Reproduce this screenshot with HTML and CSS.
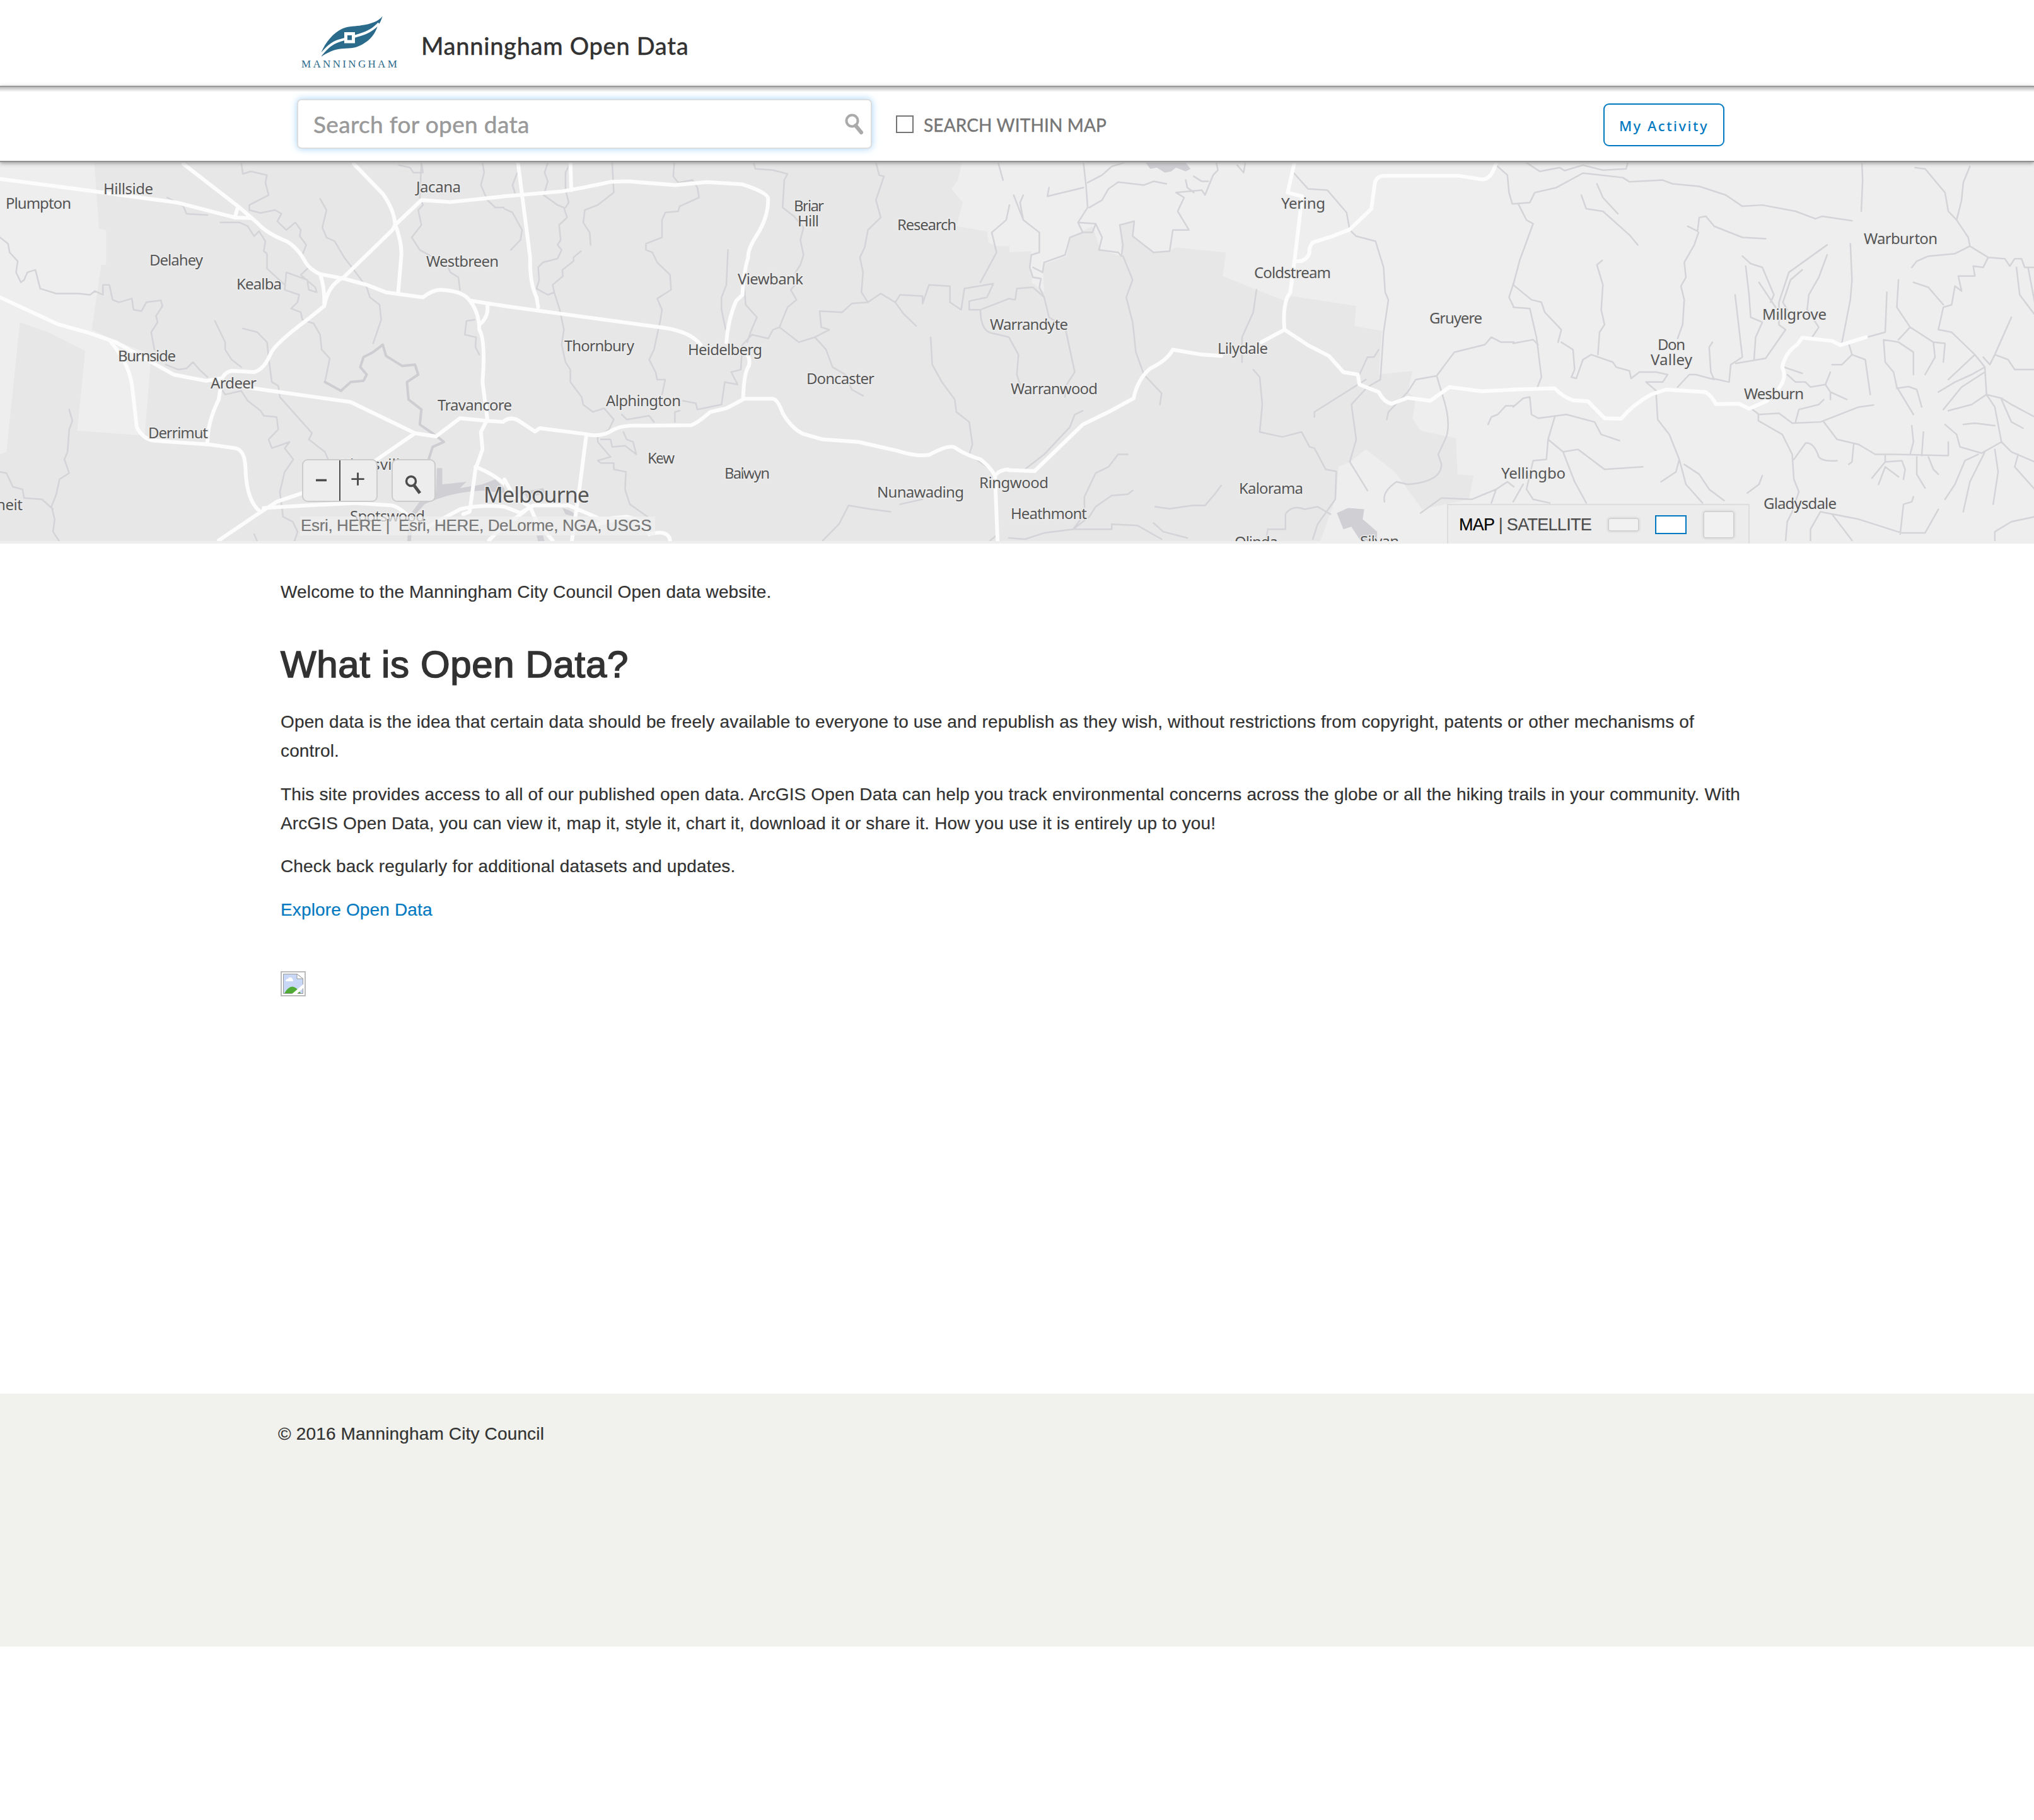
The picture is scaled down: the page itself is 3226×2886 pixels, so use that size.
FILE: index.html
```html
<!DOCTYPE html>
<html lang="en">
<head>
<meta charset="utf-8">
<title>Manningham Open Data</title>
<link rel="stylesheet" href="styles.css">
</head>
<body>
<header class="site-header">
  <svg class="logo" viewBox="0 0 160 90" role="img" aria-label="Manningham">
    <path fill="#2a6a8b" d="M130.500 3.700C124 12 112 16 98 18C88 20 78 19 68 23C52 30 40 46 34 60V67.500C41 63 50 58 58 56.500C68 54 78 55.500 88 53C104 48 118 36 122.500 20C127 14 129 9 130.500 3.700Z"/>
    <path fill="none" stroke="#fff" stroke-width="4" d="M32 66C42 54 50 46 62 42.500C72 39 80 38 89 35C104 31 115 26 125 15"/>
    <path fill="#2a6a8b" stroke="#fff" stroke-width="5" d="M72.500 31.500h12v12.500h-12z"/>
    <text class="logo-name" x="2" y="84.500" textLength="152">MANNINGHAM</text>
  </svg>
  <h1 class="site-title">Manningham Open Data</h1>
</header>

<div class="search-bar">
  <div class="search-box">
    <span class="placeholder">Search for open data</span>
    <svg class="box-icon" viewBox="0 0 30 34"><circle cx="11.500" cy="11.500" r="9" fill="none" stroke="#aaa" stroke-width="4"/><path d="M17 19L26 30" stroke="#aaa" stroke-width="6" stroke-linecap="round"/></svg>
  </div>
  <label class="within"><span class="check"></span><span>SEARCH WITHIN MAP</span></label>
  <a class="activity">My Activity</a>
</div>

<section class="map">
<svg class="map-canvas" viewBox="0 258 3226 600">
  <rect class="rural" x="0" y="250" width="3226" height="620"/>
  <!-- western tile -->
  <g transform="translate(0 250) scale(.5102 .3954)">
    <path class="urban" d="M292 0H1570V1568H0V1190L20 1180L62 660L150 700L265 775L240 1095L450 1115L470 790L370 740L285 690L300 560L315 430L330 430V290L308 285Z"/>
    <path class="water" d="M1358 1245H1375V1310L1450 1300L1430 1325L1500 1310L1540 1290L1570 1330V1345L1500 1335Q1400 1340 1320 1390L1285 1440L1275 1568H1265L1270 1440L1310 1370L1355 1340Z"/>
    <path class="stream" d="M750 20L755 65L780 55L830 70L825 100L835 150L775 190V210L810 222L855 210L875 225L862 255L890 290L918 260L935 290L932 315L952 350L940 390L960 440L935 470L980 520L985 540L960 530L955 490L890 460L885 530L930 550L925 580L905 605L935 620L940 650L975 665L995 710L1000 770L1025 805L1015 870L1010 900M520 160L550 180L570 195L580 225L645 230M685 260L745 260L770 275L790 315L805 295L825 335L820 375L830 385V445L885 510M995 165L1015 210L1002 280L1015 320L1040 335L1070 400L1100 450L1140 520L1150 560L1180 590L1185 650L1160 745M0 320L25 345L30 380L55 415L50 460L65 500L75 490L85 460L110 450L125 525L175 545L245 545L280 550L295 535L320 550V510L340 510L350 570L370 580L410 565L415 610L440 615L455 580L500 572L505 595L485 635L490 660L470 700L480 770M515 830L555 850L580 845L600 820L620 850L645 880M668 655L700 740L700 770L720 810L750 840M755 685L800 700L830 740L835 800L845 900L865 915L870 960L970 1105L960 1130L1010 1180L1020 1210M690 930L700 950L750 935L770 975L810 1015L820 1035L860 1040L865 1090L835 1130L845 1165L900 1140L885 1165L912 1210L885 1260L870 1340L880 1440L910 1460L925 1500L915 1540M215 1010L225 1055L215 1090L210 1180L200 1210L215 1265L185 1290L175 1350L160 1400L170 1450L165 1500L185 1540M0 1260L20 1265L40 1320L70 1330L75 1365L130 1370L165 1410M1310 20L1315 60L1285 60L1275 40L1240 30M1310 20L1305 160L1315 190L1300 210L1310 270L1280 320L1305 370L1390 430L1400 460L1425 480L1430 530M1500 20L1505 60L1495 110L1515 170L1540 200H1570M1475 650L1450 655L1445 710L1480 720L1478 760L1490 790M790 1510L800 1540"/>
    <path class="river" d="M1010 900L1060 935L1090 900L1130 895L1140 870L1120 840L1130 800L1160 780L1190 750L1200 795L1250 835L1290 830L1300 870L1265 900L1270 970L1310 1010L1305 1070L1355 1115L1380 1140L1345 1160L1330 1220"/>
    <path class="road" d="M0 85L280 133L550 180L730 240L780 242M570 25L740 195L800 262Q830 305 890 335Q925 360 950 420Q965 450 995 467L1068 485L1140 510L1200 540L1315 560Q1345 530 1370 530Q1440 535 1460 573L1570 595M740 195L730 240M1100 25L1190 145Q1225 210 1228 265Q1252 350 1247 400L1238 540M1570 155L1400 178L1310 170L1228 270L1220 290L1068 480Q1020 510 1008 595L960 645Q850 750 840 790Q820 850 790 860L720 855Q700 860 690 885L640 895L540 870L360 740L270 700L180 668L0 560M995 467Q1010 520 1008 595M345 740Q405 830 412 930L425 1080Q445 1130 480 1135L650 1150L730 1165Q760 1170 763 1240Q765 1370 805 1415M690 885L680 970Q645 1060 645 1140L640 1150M760 920L1090 980L1290 1105L1355 1118L1430 1045L1510 1055L1570 1060M1290 1105L1150 1230L940 1345L860 1380L800 1430L680 1535M820 1405L950 1395L1100 1385L1220 1395Q1260 1410 1290 1480M1460 573Q1490 620 1490 690Q1510 730 1500 900L1515 1050L1495 1100L1500 1170L1478 1250L1460 1420L1440 1430M1515 590Q1520 640 1490 670M1478 1240Q1530 1265 1570 1310M1330 1480L1430 1410Q1490 1390 1570 1400M1570 1470L1520 1535"/>
  </g>
  <!-- inner suburbs -->
  <g transform="translate(800 250) scale(.5102 .3954)">
    <path class="urban" d="M0 0H1425L1410 90L1390 125L1425 180L1405 275L1500 295L1505 340L1530 355H1570V1568H0Z"/>
    <path class="water" d="M60 1340L120 1325L130 1345L70 1365ZM180 1405Q220 1420 222 1440L190 1430ZM100 1515H120L125 1540H105Z"/>
    <path class="stream" d="M135 20L125 60L135 95L122 150L165 190L185 200L195 240L170 270L175 330L165 350L178 370L165 405L120 420L105 440L108 490L100 525L135 550L155 540L172 610L185 690L178 750L190 820L205 850V900L240 960L245 990L275 1020L310 1005L340 1050L325 1090L290 1120M205 20L190 60V130L200 180L190 200M335 20L340 140L325 155L290 190L250 210L245 260L265 300L268 350M238 375L215 400L215 415L180 450L182 475L150 510L155 540M0 205L25 220L55 290L50 330L20 370M40 60L25 110L35 150M528 20L525 75L540 100L585 90L600 120L605 160L545 195L540 215L500 220L490 250L490 320L440 345L440 370L460 380L475 420L515 470L518 530L475 565L490 610L485 650L465 770L450 810L470 860L475 890H500L490 950M695 370L690 510L675 560V610L688 690M775 20L780 45L835 50L880 65L870 90L865 200L900 235L930 280L920 330L930 390L920 430L905 460L910 500L890 530L908 570L880 600L855 680L835 690L820 725L770 710L740 750L735 850L705 860L725 910L685 900L675 990L600 1010L595 985L555 975M745 500L750 590L785 640L765 700L755 740M855 680L915 740L965 720L1010 690L985 680L980 615L1050 620L1080 585L1130 580L1170 545L1215 580L1230 550L1300 555V585L1320 510L1385 515V580L1420 610L1430 525L1520 505L1500 560L1445 575V610H1480L1570 565M1480 500L1530 380L1515 300L1560 250L1570 190M1155 20L1165 70L1180 75L1155 170L1170 240L1130 290L1120 360L1105 400L1115 460L1110 540L1130 580M1215 580L1240 625L1280 675M1480 610Q1480 700 1520 705L1570 720M965 720L1000 770L1020 840L1060 870L1080 930L1115 955M1325 720L1330 830L1360 900L1400 970L1405 1020L1445 1060L1455 1150L1445 1190L1500 1240M290 1120L290 1140L330 1200L290 1215L300 1225L340 1225V1250L378 1260L375 1330L390 1390L445 1440M370 1100L380 1130L400 1140L410 1190L375 1155L335 1160L330 1130L300 1130M365 1030L380 1050L450 1035L465 1060M530 1060V1020L545 1015M990 1535L1040 1470L1070 1395L1140 1410L1200 1420M1230 1390L1300 1370M1510 1535L1530 1515M1535 20L1550 90"/>
    <path class="road" d="M0 155L180 135Q250 120 330 97L385 95L530 110L630 98L740 107Q820 140 820 165Q820 240 785 310Q755 370 758 400Q745 450 740 550L720 575Q695 650 690 740M205 20L208 130M42 20L80 400Q78 500 100 560L105 600M0 595L170 625L500 683Q580 700 610 750M755 790Q765 810 760 835Q745 860 742 965M0 1055Q25 1035 50 1060L95 1098L110 1085L250 1108Q300 1125 340 1090Q370 1070 430 1075L580 1073Q600 1065 640 1020L690 1005Q720 985 745 967L835 967Q850 970 865 1025Q895 1090 930 1108L990 1130L1100 1140L1220 1175Q1280 1200 1320 1192Q1380 1150 1400 1162Q1430 1190 1480 1210Q1510 1240 1525 1275L1533 1535M1525 1275Q1540 1250 1570 1250M255 1110L235 1310L210 1535M0 1400L50 1425L90 1395L200 1395L300 1450L380 1440Q430 1450 450 1510Q510 1490 515 1535M0 1290L30 1360L80 1400L30 1450M80 1400L100 1460L150 1535M380 1440L290 1470"/>
  </g>
  <!-- outer east -->
  <g transform="translate(1600 250) scale(.5102 .3954)">
    <path class="urban" d="M0 380L70 375L65 440L75 470L70 500L110 540L105 430L180 395L190 320L260 275L285 370L350 395L345 270L390 250L385 320L450 380L500 375L520 360L675 380L665 475L770 530L860 575L880 555L1080 595L1075 675L1160 695L1150 870L1255 855L1240 940L1265 965L1255 1045L1280 1095L1390 1125L1395 1270L1445 1275L1430 1370L1285 1410L1200 1260L1110 1170L1060 1220L1025 1240L1018 1360L960 1568H0Z"/>
    <path class="water" d="M425 20L440 45L460 40L485 60L505 55L520 40L550 55L565 45L550 20ZM1020 1425L1055 1405L1105 1410L1100 1450L1145 1500L1145 1540H1095L1065 1480L1040 1490Z"/>
    <path class="stream" d="M232 20L240 110L245 200L215 260L270 265L260 300L230 300L215 260M232 120L120 155L125 120M360 20L320 35L290 70L245 100M490 105L450 95L420 110L340 98L310 125L290 170L250 200M15 150L45 250L95 300V380L70 390L65 440L75 480L100 485L95 520L110 560L125 640L175 680L205 860L175 920V960M45 150L35 180L45 250M75 440L105 460L110 420L175 390L190 320L230 300M270 265L290 320L280 370L340 380L350 395L355 350L345 270L390 255L385 315L450 380L500 375L510 290L560 290L525 215L545 160L520 140L600 130L610 150L635 70L650 50L645 20M355 395L385 490L365 560L385 660L395 780L420 870L475 945L470 990M550 90L555 120L575 140M575 75L600 95L620 95M710 30L730 60L735 20M885 60L930 125L990 130L1050 220L1060 290L1080 315L1140 335L1165 440L1170 540L1180 570L1165 700L1155 890L1115 920L1065 990L1080 1130L1060 1220L1115 1335M770 530L760 620L725 720L725 820M760 850L780 880L788 990L780 1100L850 1120L910 1100L935 1160L950 1165L985 1250L1018 1258L1015 1370L960 1470L945 1530M1150 770L1135 800L1115 800L1090 870M1110 890L950 1020V1040M0 565L20 570L25 525L75 520L110 560M0 720L30 790L25 870L35 910M230 1015L205 1030L190 1080L110 1190L50 1250M370 1190L340 1190L310 1240L270 1265L235 1360V1430L200 1490M385 1335L370 1350L320 1355L270 1400L250 1440L200 1490L110 1505L50 1530L0 1525M200 1490L320 1490V1470L400 1475L475 1530M450 1465L480 1500L555 1525M455 1400L500 1408L570 1395L610 1395L640 1350L660 1315M800 1535L805 1490H860V1430Q880 1390 920 1410L960 1400L1000 1430M1175 1050L1180 1020L1240 940L1265 890L1330 875L1385 780L1480 750L1500 720L1530 740H1570M1330 875L1350 960Q1375 1060 1360 1120L1335 1190L1345 1230Q1345 1300 1240 1310L1205 1300Q1160 1340 1168 1380M1570 995L1545 995L1520 1030L1500 1040L1490 1070M1280 1425L1345 1365L1440 1370L1515 1330L1550 1300L1570 1320M1515 1330L1500 1385M1515 30L1550 70L1555 140L1565 185M1570 500L1555 560L1570 600"/>
    <path class="road" d="M888 20L867 140L912 155L888 415L875 540Q850 580 857 690M1515 20Q1500 90 1470 87L1400 73H1165Q1140 75 1137 110L1127 205L1060 288L1000 318L945 340Q932 360 935 380Q925 420 890 415M857 690L785 740M857 690L930 752L995 795L1040 860L1085 870L1090 910L1150 940Q1165 980 1190 987L1240 963L1310 975L1370 920L1470 937L1570 930M660 795L600 790L510 770Q490 815 440 845Q400 890 388 965L310 1020L230 1070L80 1257L0 1253"/>
  </g>
  <!-- Yarra Valley -->
  <g transform="translate(2400 250) scale(.5268 .3954)">
    <path class="stream" d="M0 185L50 180L65 140L130 120L210 62L330 80L350 97L450 90L480 105L560 115L640 150L690 195L750 190L850 215L910 245L930 235L1020 253M40 20L80 55L140 40L155 52L210 30L270 50L340 45L345 20M15 185L40 250L60 265L20 410L0 510L55 570L85 580L95 620L145 690L135 740M145 740L180 770L185 850L175 880L190 885L210 810L235 790L300 820L310 840L350 855L355 885L380 860L430 860L465 870L450 900L400 900L435 940M205 150L220 205L270 215L350 310L375 350M252 105L270 160L315 225M268 412L252 430L270 510L265 610L275 670L260 700L255 790M525 275L555 295L560 240L580 235L605 275L690 320L760 325M558 300L545 350L515 420L520 480L505 515L515 570L510 670L495 725M600 740L590 760L595 860L605 890L550 870L530 870L495 920M668 550L690 800L655 830L650 900L600 885M700 435L710 550L715 640L750 660L730 720L725 810M690 395L715 425L750 440L785 550L775 580M740 500L790 600M945 350L830 460L800 580V670L820 690L760 805L670 825M945 390L920 480L890 550L885 610L920 680L900 720M870 450L835 490L812 580L825 610M1015 345L1020 490L1015 570L990 740M1050 25L1052 90L1048 215M1210 40L1240 45L1300 140L1310 215L1335 250L1370 320L1375 355L1430 400L1480 405L1495 435L1510 405H1530L1540 440H1570M1375 35L1355 100L1350 170L1335 250M1200 440L1215 415L1250 395L1330 385L1375 355M1430 400L1415 440L1385 435L1390 475L1340 475L1350 535L1330 515L1320 590L1295 600L1280 690M1205 500L1250 520L1295 590M1160 490L1155 600L1195 680L1160 730M1195 680L1265 740L1300 745L1295 820M1125 540L1120 700L1065 720M1115 730L1160 740L1205 780V870M1115 730L1120 820L1145 860L1155 920L1205 1030M1155 925L1190 918L1215 930L1230 1000M1010 745L1020 790L1060 810L1075 950M1020 790L990 830L960 830M815 840L870 865M825 870L850 900L880 900L895 920L940 910L955 860M940 910L955 940L1005 970M955 940V970M935 970L920 990L860 1010L850 1060M720 1010L740 1030L800 1025L840 1065L925 1060L1040 1000L1085 992M738 1030V1055L810 1110L840 1190L845 1290L860 1340L840 1420L825 1460L820 1540M935 1060L975 1130L1040 1150L1090 1190L1150 1190L1310 1195V1140M845 1210L880 1145Q905 1140 920 1200Q930 1220 975 1215M1025 1150L1020 1220L1010 1230M1120 1195V1220L1080 1285M1120 1220L1170 1215L1180 1250L1175 1290M1120 1240L1100 1310M1120 1240L1160 1280M1200 1075L1205 1140L1195 1190M1235 1100L1230 1195M1215 1200L1215 1270L1240 1325M1250 1200L1265 1250L1280 1270M1280 690L1320 700L1390 790L1420 840L1425 950L1450 1000L1470 1140L1500 1180L1570 1220M1300 1070L1335 1110L1345 1160L1410 1185L1470 1140M1355 1070L1390 1065L1450 1075M1425 950L1470 965L1500 990L1570 1040M1470 970L1500 1060L1535 1085M1310 1015L1380 990L1425 950M1420 860L1350 920L1295 1010M1420 840L1380 870L1330 900L1280 940M1390 790L1310 890M1450 1170L1460 1260L1445 1390M1420 1180L1375 1300L1355 1420M1400 1190L1360 1215L1330 1310L1300 1370M1500 640L1480 700L1450 790L1435 830L1415 800M1450 790L1490 810L1510 850H1570M1515 440L1525 550L1570 630M1550 440L1570 580M1520 1190L1510 1240L1570 1330M1240 870L1270 800L1265 740M430 940L435 1050L470 1110L500 1210L490 1260L445 1300M500 1210L520 1310L570 1385M515 1230L560 1270L590 1330L635 1375M750 1275L740 1310L705 1345M50 960L55 1030L75 1045L160 1030L245 1060L265 1110L320 1135M0 1000L30 965L50 960M125 1040L105 1130L150 1180L185 1300L220 1385M150 1180L195 1170L275 1250L390 1240M105 1130L100 1210L60 1215L40 1330L60 1370L110 1385M0 600L50 605L70 720L85 880L70 930M0 745L60 730L75 750M925 1420L895 1490V1540M925 1420L1040 1450L1170 1505H1240L1280 1410M960 1430L1000 1500L1020 1535M1205 1360L1200 1380L1175 1390L1165 1510M1570 1440L1500 1460L1450 1500V1540M0 1380L30 1310"/>
    <path class="road" d="M0 930L125 925Q150 960 180 973L225 977L275 1045L325 1047Q360 990 415 950L460 930L580 940Q600 960 610 988L680 987L710 1007L765 975M800 925Q825 880 810 840Q820 780 855 750L870 722L960 735L985 752L1062 720"/>
  </g>
  <g class="places" transform="translate(-1 1)">
    <text x="165" y="307" textLength="79">Hillside</text>
    <text x="10" y="330" textLength="104">Plumpton</text>
    <text x="238" y="420" textLength="85">Delahey</text>
    <text x="376" y="458" textLength="72">Kealba</text>
    <text x="661" y="304" textLength="71">Jacana</text>
    <text x="677" y="422" textLength="115">Westbreen</text>
    <text x="188" y="572" textLength="92">Burnside</text>
    <text x="335" y="615" textLength="73">Ardeer</text>
    <text x="236" y="694" textLength="95">Derrimut</text>
    <text x="695" y="650" textLength="118">Travancore</text>
    <text x="-5" y="808" textLength="42">neit</text>
    <text x="541" y="744" textLength="108">Kingsville</text>
    <text x="556" y="826" textLength="119">Spotswood</text>
    <text class="city" x="768" y="796" textLength="168">Melbourne</text>
    <text x="1260" y="334" textLength="48">Briar</text>
    <text x="1266" y="358" textLength="34">Hill</text>
    <text x="1424" y="364" textLength="94">Research</text>
    <text x="1171" y="450" textLength="104">Viewbank</text>
    <text x="896" y="556" textLength="111">Thornbury</text>
    <text x="1092" y="562" textLength="118">Heidelberg</text>
    <text x="1280" y="608" textLength="108">Doncaster</text>
    <text x="962" y="643" textLength="119">Alphington</text>
    <text x="1028" y="734" textLength="43">Kew</text>
    <text x="1150" y="758" textLength="72">Balwyn</text>
    <text x="1392" y="788" textLength="138">Nunawading</text>
    <text x="1554" y="773" textLength="110">Ringwood</text>
    <text x="1571" y="522" textLength="124">Warrandyte</text>
    <text x="2033" y="330" textLength="70">Yering</text>
    <text x="1990" y="440" textLength="122">Coldstream</text>
    <text x="2268" y="512" textLength="84">Gruyere</text>
    <text x="1932" y="560" textLength="80">Lilydale</text>
    <text x="1604" y="624" textLength="138">Warranwood</text>
    <text x="1966" y="782" textLength="102">Kalorama</text>
    <text x="1604" y="822" textLength="121">Heathmont</text>
    <text x="1959" y="867" textLength="69">Olinda</text>
    <text x="2158" y="866" textLength="62">Silvan</text>
    <text x="2382" y="758" textLength="102">Yellingbo</text>
    <text x="2957" y="386" textLength="117">Warburton</text>
    <text x="2796" y="506" textLength="102">Millgrove</text>
    <text x="2630" y="554" textLength="44">Don</text>
    <text x="2619" y="578" textLength="66">Valley</text>
    <text x="2767" y="632" textLength="95">Wesburn</text>
    <text x="2798" y="806" textLength="116">Gladysdale</text>
  </g>
</svg>
<div class="zoom-tools">
  <div class="tool zoom-pair">
    <svg viewBox="0 0 58 64"><path d="M20 31.500H37" stroke="#4c4c4c" stroke-width="3.500"/></svg>
    <svg class="plus" viewBox="0 0 58 64"><path d="M18 29.500H39M28.500 19V40" stroke="#4c4c4c" stroke-width="3"/></svg>
  </div>
  <div class="tool find"><svg viewBox="0 0 66 64"><circle cx="29" cy="33" r="7.500" fill="none" stroke="#4c4c4c" stroke-width="3.500"/><path d="M34 40L43 52" stroke="#4c4c4c" stroke-width="5"/></svg></div>
</div>
<div class="credits">Esri, HERE |&nbsp; Esri, HERE, DeLorme, NGA, USGS</div>
<div class="basemap">
  <span class="basemap-names"><b>MAP</b> | SATELLITE</span>
  <i class="size small"></i><i class="size medium"></i><i class="size large"></i>
</div>
</section>

<main class="content">
  <p class="welcome">Welcome to the Manningham City Council Open data website.</p>
  <h2>What is Open Data?</h2>
  <p>Open data is the idea that certain data should be freely available to everyone to use and republish as they wish, without restrictions from copyright, patents or other mechanisms of control.</p>
  <p>This site provides access to all of our published open data. ArcGIS Open Data can help you track environmental concerns across the globe or all the hiking trails in your community. With ArcGIS Open Data, you can view it, map it, style it, chart it, download it or share it. How you use it is entirely up to you!</p>
  <p>Check back regularly for additional datasets and updates.</p>
  <p><a>Explore Open Data</a></p>
  <svg class="missing" viewBox="0 0 40 40">
    <path d="M1 1H39V39H1Z" fill="#fff" stroke="#bbb" stroke-width="2"/>
    <path d="M4.500 4.500H26L35.500 12V35.500H4.500Z" fill="#c8d7f5"/>
    <path d="M6 35Q18 14 32 35Z" fill="#4fab35"/>
    <path d="M8 16Q8 12 12 12Q13 9 17 10Q20 12 20 16Z" fill="#fff"/>
    <path d="M4.500 4.500H26L35.500 12V35.500H4.500Z" fill="none" stroke="#999"/>
    <path d="M26 4.500V12H35.500Z" fill="#fff" stroke="#999"/>
    <path d="M17 37L38 19V25L25 37Z" fill="#fff"/>
  </svg>
</main>
<footer class="site-footer">© 2016 Manningham City Council</footer>
</body>
</html>
```
FILE: styles.css
```css
* { box-sizing: border-box; }
body { margin: 0; background: #fff; color: #323232; font: 28px/46px "Liberation Sans", Arial, sans-serif; letter-spacing: .15px; -webkit-text-stroke: .2px; }
.site-header { height: 136px; padding: 22px 0 0 476px; display: flex; align-items: flex-start; }
.logo { width: 160px; height: 90px; }
.logo-name { font: 17px "Liberation Serif", serif; fill: #2a6a8b; }
.site-title { margin: 20px 0 0 32px; font: 500 38px/60px Lato, sans-serif; letter-spacing: .7px; white-space: nowrap; -webkit-text-stroke: .3px #323232; }

.search-bar { position: relative; z-index: 2; height: 121px; padding: 0 491px 0 471px; display: flex; align-items: center; background: linear-gradient(#bbb, #fff 8px); box-shadow: 0 2px 6px #999; border-top: 2px solid #999; border-bottom: 2px solid #919191; font-family: Lato, sans-serif; }
.search-box { width: 912px; height: 79px; padding: 0 11px 0 24px; display: flex; align-items: center; justify-content: space-between; border: 2px solid #ddd; border-radius: 7px; background: #fff; box-shadow: 0 0 12px #a4d4fa; }
.placeholder { font-size: 37px; letter-spacing: .35px; color: #999; -webkit-text-stroke: .5px #999; }
.box-icon { width: 30px; height: 34px; }
.within { margin: 2px 0 0 38px; display: flex; align-items: center; gap: 16px; font-size: 28px; color: #757575; white-space: nowrap; -webkit-text-stroke: .4px #757575; }
.check { width: 28px; height: 28px; margin-top: -2px; border: 2px solid #757575; }
.activity { margin: 3px 0 0 auto; width: 192px; height: 68px; border: 2px solid #0079c1; border-radius: 9px; color: #0079c1; font: 500 22px/67px "Noto Sans", sans-serif; letter-spacing: 2.5px; text-align: center; -webkit-text-stroke: 0; white-space: nowrap; }

.map { position: relative; height: 605px; padding-top: 1px; background: #eee; overflow: hidden; }
.map-canvas { display: block; width: 3226px; height: 600px; letter-spacing: 0; -webkit-text-stroke: 0; }
.rural { fill: #eee; }
.urban { fill: #e7e7e7; }
.water { fill: #cfcfd4; }
.stream, .river, .road { fill: none; stroke-linejoin: round; stroke-linecap: round; vector-effect: non-scaling-stroke; }
.stream { stroke: #d4d4d8; stroke-width: 2.500px; }
.river { stroke: #cdcdd2; stroke-width: 4px; }
.road { stroke: #fcfcfc; stroke-width: 6px; }
.places { font: 24px "Noto Sans", sans-serif; fill: #555; stroke: #ededed; stroke-width: 3px; paint-order: stroke; }
.places .city { font-size: 34px; }

.zoom-tools { position: absolute; left: 479px; top: 471px; display: flex; gap: 22px; }
.tool { display: flex; height: 68px; border: 2px solid #ccc; border-radius: 9px; background: #ededed; }
.zoom-pair { width: 120px; }
.zoom-pair svg { width: 58px; height: 64px; }
.zoom-pair .plus { margin-left: -1px; border-left: 2px solid #4c4c4c; }
.find { width: 70px; }
.find svg { width: 66px; height: 64px; }
.credits { position: absolute; left: 476px; top: 562px; width: 563px; height: 30px; padding-left: 1px; font-size: 26px; line-height: 29px; letter-spacing: -.35px; color: #777; background: rgba(240,240,240,.72); white-space: nowrap; }
.basemap { position: absolute; left: 2295px; top: 542px; width: 480px; height: 63px; padding-left: 17px; display: flex; align-items: center; border: 2px solid #ddd; border-bottom: 0; background: #ececec; color: #4c4c4c; font-size: 27px; }
.basemap-names { width: 237px; padding-top: 1px; white-space: nowrap; letter-spacing: -.7px; }
.basemap b { color: #000; font-weight: 400; }
.size { display: block; width: 48px; background: #f1f1f1; border: 1px solid #ccc; border-radius: 3px; box-shadow: 0 0 4px #bbb; }
.small { height: 20px; }
.medium { width: 50px; height: 30px; margin-left: 26px; border: 2px solid #0079c1; border-radius: 0; background: #fff; box-shadow: none; }
.large { height: 42px; margin-left: 27px; }

.content { height: 1348px; width: 2775px; padding: 54px 0 0 445px; }
.content p { margin: 0 0 22.500px; }
.content .welcome { margin-bottom: 56px; }
.content h2 { margin: 0 0 32px; font: 400 60px/72px "Liberation Sans", Arial, sans-serif; letter-spacing: .65px; -webkit-text-stroke: 1.600px #323232; }
.content a { color: #0079c1; }
.missing { display: block; width: 40px; height: 40px; margin-top: 74px; }
.site-footer { height: 401px; padding: 41px 0 0 441px; background: #f1f2ed; }
```
